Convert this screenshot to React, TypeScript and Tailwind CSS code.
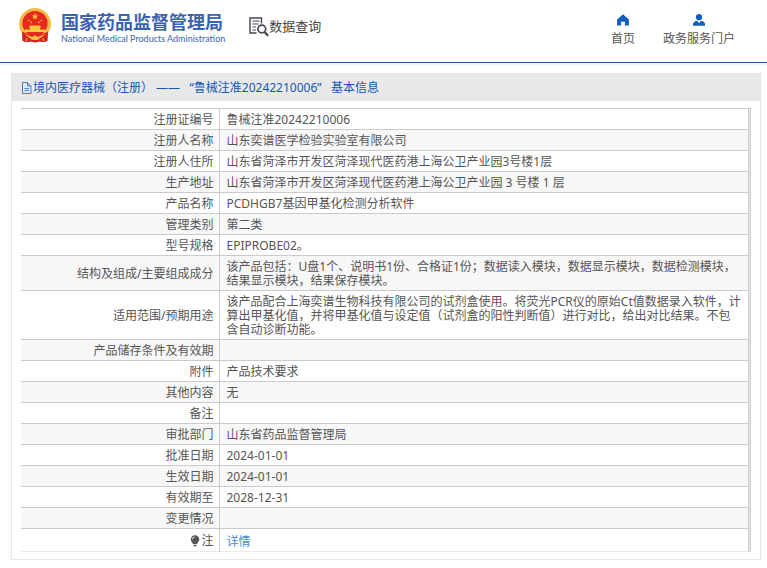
import type { ReactNode } from 'react'

type Row = { label: string; value: ReactNode }

const rows: Row[] = [
  { label: '注册证编号', value: '鲁械注准20242210006' },
  { label: '注册人名称', value: '山东奕谱医学检验实验室有限公司' },
  { label: '注册人住所', value: '山东省菏泽市开发区菏泽现代医药港上海公卫产业园3号楼1层' },
  { label: '生产地址', value: '山东省菏泽市开发区菏泽现代医药港上海公卫产业园 3 号楼 1 层' },
  { label: '产品名称', value: 'PCDHGB7基因甲基化检测分析软件' },
  { label: '管理类别', value: '第二类' },
  { label: '型号规格', value: 'EPIPROBE02。' },
  {
    label: '结构及组成/主要组成成分',
    value: '该产品包括：U盘1个、说明书1份、合格证1份；数据读入模块，数据显示模块，数据检测模块，结果显示模块，结果保存模块。',
  },
  {
    label: '适用范围/预期用途',
    value:
      '该产品配合上海奕谱生物科技有限公司的试剂盒使用。将荧光PCR仪的原始Ct值数据录入软件，计算出甲基化值，并将甲基化值与设定值（试剂盒的阳性判断值）进行对比，给出对比结果。不包含自动诊断功能。',
  },
  { label: '产品储存条件及有效期', value: '' },
  { label: '附件', value: '产品技术要求' },
  { label: '其他内容', value: '无' },
  { label: '备注', value: '' },
  { label: '审批部门', value: '山东省药品监督管理局' },
  { label: '批准日期', value: '2024-01-01' },
  { label: '生效日期', value: '2024-01-01' },
  { label: '有效期至', value: '2028-12-31' },
  { label: '变更情况', value: '' },
]

function Emblem() {
  return (
    <svg viewBox="0 0 32 36" className="w-8 h-9 shrink-0" aria-hidden="true">
      <path d="M3 22 L4 33 Q8 34.500 11 33.500 L16 34.500 L21 33.500 Q24 34.500 28 33 L29 22Z" fill="#d8231c" />
      <circle cx="16" cy="16" r="16" fill="#f3bd45" />
      <circle cx="16" cy="15.500" r="12.600" fill="#e5291c" />
      <path d="M16 5l.9 2.400h2.500l-2 1.600.7 2.500-2.100-1.500-2.100 1.500.7-2.500-2-1.600h2.500z" fill="#f9c93d" />
      <g fill="#f9c93d">
        <circle cx="9.800" cy="12.500" r=".8" />
        <circle cx="12.300" cy="14.400" r=".8" />
        <circle cx="19.700" cy="14.400" r=".8" />
        <circle cx="22.200" cy="12.500" r=".8" />
        <path d="M11 17.500h10l1.500 2h-1.500v2h5.500v2.500H5.500v-2.500H11v-2H9.500z" />
      </g>
      <path d="M3 23.500 Q9 27 16 27 T29 23.500 L28.500 33 L22 34 L20 31.500 H12 L10 34 L3.500 33Z" fill="#d8231c" />
      <path d="M5.500 26.500 Q11 27.500 13 29 Q16 26 19 29 Q21 27.500 26.500 26.500 Q22 29.500 19.500 31.200 Q16 33 12.500 31.200 Q10 29.500 5.500 26.500Z" fill="#f3bd45" />
      <path d="M8 30l-.5 3M24 30l.5 3" stroke="#f3bd45" strokeWidth="1" fill="none" />
    </svg>
  )
}

function QueryIcon() {
  return (
    <svg viewBox="0 0 20 20" className="size-5 shrink-0" fill="none" stroke="#45454f" aria-hidden="true">
      <path d="M12.500 6.500V1H1v15h6.500" strokeWidth="1.400" />
      <path d="M3.500 4h7M3.500 7h6M3.500 10h3.500M3.500 13h3.500" strokeWidth="1.200" />
      <circle cx="12.800" cy="12" r="3.900" strokeWidth="1.700" />
      <path d="M15.500 15l3.700 3.800" strokeWidth="2.300" />
    </svg>
  )
}

function HomeIcon() {
  return (
    <svg viewBox="0 0 12 12" className="size-3" fill="#0f5fbd" aria-hidden="true">
      <path d="M6 0.300 L11.900 5.400 V11.500 H7.900 V7.700 H4.100 V11.500 H0.100 V5.400Z" />
    </svg>
  )
}

function UserIcon() {
  return (
    <svg viewBox="0 0 12 12" className="size-3" fill="#0f5fbd" aria-hidden="true">
      <circle cx="6" cy="3.200" r="3.100" />
      <path d="M0 11.800 V10.200 Q0.200 7.300 4 7 L6 9 L8 7 Q11.800 7.300 12 10.200 V11.800Z" />
    </svg>
  )
}

function DocIcon() {
  return (
    <svg viewBox="0 0 12 12" className="w-3 h-3 shrink-0" fill="none" stroke="#3a72c4" aria-hidden="true">
      <path d="M1.500 .5h5l3.500 3.500v7.500H1.500zM6.500 .5V4H10M3.500 6.500h4.500M3.500 8.500h4.500" strokeWidth=".9" />
    </svg>
  )
}

function BulbIcon() {
  return (
    <svg viewBox="0 0 10 12" className="w-[10px] h-3 shrink-0" aria-hidden="true">
      <path d="M5 .3a4.300 4.300 0 0 1 4.300 4.300c0 2-1.800 2.700-2.200 4.400H2.900C2.500 7.300.7 6.600.7 4.600A4.300 4.300 0 0 1 5 .3zM3.500 9.700h3v1.500h-3z" fill="#555" />
      <path d="M2.300 4.500A2.600 2.600 0 0 1 4.600 2" stroke="#fff" strokeWidth=".9" fill="none" />
    </svg>
  )
}

export default function App() {
  return (
    <div className="bg-white text-[#555] text-[12px] leading-[14px] font-['Noto_Sans','Noto_Sans_CJK_SC',sans-serif]">
      <header className="h-[63px] flex items-start justify-between border-b border-[#1c5a9c] pl-[19px] pr-8">
        <div className="flex items-start">
          <a href="#" className="flex items-start gap-[10px] pt-2 text-[#3c62ae]">
            <Emblem />
            <span className="flex flex-col pt-1">
              <span className="text-[18px] leading-[20px] font-bold">国家药品监督管理局</span>
              <span className="text-[9px] leading-[14px] font-['Lato',sans-serif]">
                National Medical Products Administration
              </span>
            </span>
          </a>
          <a href="#" className="flex items-start ml-6 pt-[17px] text-[#444]">
            <QueryIcon />
            <span className="text-[13px] leading-[18px]">数据查询</span>
          </a>
        </div>
        <nav className="flex gap-7 pt-[14px]">
          <a href="#" className="flex flex-col items-center gap-[6px]">
            <HomeIcon />
            首页
          </a>
          <a href="#" className="flex flex-col items-center gap-[6px]">
            <UserIcon />
            政务服务门户
          </a>
        </nav>
      </header>
      <div className="h-1 bg-linear-to-b from-[#e3f2fa] to-white" />

      <main className="ml-[11px] mr-[6px] mt-[6px] border border-t-0 border-[#e6e6e6]">
        <h1 className="h-7 flex items-center bg-[#e8e8e8] pt-px pl-[9px] text-[#1557b5] whitespace-pre">
          <DocIcon />
          境内医疗器械（注册） ——   “鲁械注准20242210006”   基本信息
        </h1>
        <div className="mx-[9px] my-[7px] border-r border-[#c9cbcd] bg-[#e9eaeb] pr-px">
          <table className="w-full table-fixed border-collapse bg-white">
            <colgroup>
              <col className="w-[198px]" />
              <col />
            </colgroup>
            <tbody>
              {rows.map(row => (
                <tr key={row.label} className="border-t border-[#c9cbcd] even:bg-[#f7f7f7]">
                  <th scope="row" className="h-[21px] border-r border-[#c9cbcd] pr-[5px] pt-1 pb-[2px] text-right font-normal">
                    {row.label}
                  </th>
                  <td className="border-r border-[#c9cbcd] px-[7px] pt-1 pb-[2px]">{row.value}</td>
                </tr>
              ))}
              <tr className="border-t border-b border-t-[#c9cbcd] border-b-[#e9e9e9]">
                <th scope="row" className="h-[23px] border-r border-[#c9cbcd] pr-[5px] pt-1 pb-[2px] font-normal">
                  <span className="flex items-center justify-end gap-px">
                    <BulbIcon />
                    注
                  </span>
                </th>
                <td className="border-r border-[#c9cbcd] px-[7px] pt-[6px] pb-[2px]">
                  <a href="#" className="text-[#428bdb]">详情</a>
                </td>
              </tr>
            </tbody>
          </table>
        </div>
      </main>
    </div>
  )
}
